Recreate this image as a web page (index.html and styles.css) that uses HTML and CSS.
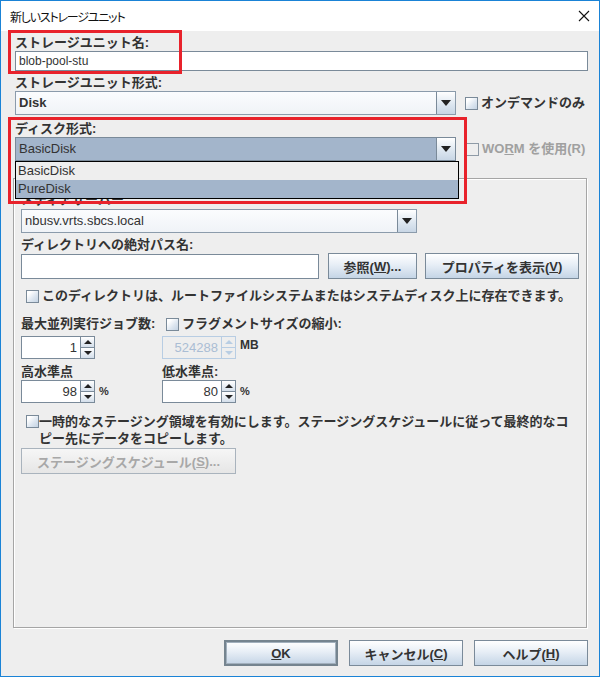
FILE: index.html
```html
<!DOCTYPE html>
<html lang="ja">
<head>
<meta charset="utf-8">
<title>新しいストレージユニット</title>
<link rel="stylesheet" href="styles.css">
</head>
<body>
<div class="window">
  <div class="titlebar">
    <span class="title">新しいストレージユニット</span>
    <svg class="close" width="12" height="12" viewBox="0 0 12 12"><path d="M1 1 L11 11 M11 1 L1 11" stroke="#111" stroke-width="1.1" fill="none"/></svg>
  </div>
  <div class="content">
    <div class="label l1">ストレージユニット名:</div>
    <div class="textfield name">blob-pool-stu</div>

    <div class="label l2">ストレージユニット形式:</div>
    <div class="row combo-row">
      <div class="combo wide"><span class="combo-text b">Disk</span><span class="arrow-btn"><svg width="10" height="6" viewBox="0 0 10 6"><path d="M0 0 H10 L5 6 Z" fill="#222"/></svg></span></div>
      <div class="check"><span class="box"></span><span>オンデマンドのみ</span></div>
    </div>

    <div class="label l3">ディスク形式:</div>
    <div class="row combo-row">
      <div class="combo wide selected"><span class="combo-text">BasicDisk</span><span class="arrow-btn"><svg width="10" height="6" viewBox="0 0 10 6"><path d="M0 0 H10 L5 6 Z" fill="#222"/></svg></span></div>
      <div class="check disabled"><span class="box"></span><span>WO<u>R</u>M を使用(R)</span></div>
    </div>

    <div class="panel">
      <div class="label media">メディアサーバー:</div>
      <div class="combo media-combo"><span class="combo-text">nbusv.vrts.sbcs.local</span><span class="arrow-btn"><svg width="10" height="6" viewBox="0 0 10 6"><path d="M0 0 H10 L5 6 Z" fill="#222"/></svg></span></div>

      <div class="label dir">ディレクトリへの絶対パス名:</div>
      <div class="row path-row">
        <div class="textfield path"></div>
        <div class="btn browse">参照(<u>W</u>)...</div>
        <div class="btn props">プロパティを表示(<u>V</u>)</div>
      </div>

      <div class="check root"><span class="box"></span><span>このディレクトリは、ルートファイルシステムまたはシステムディスク上に存在できます。</span></div>

      <div class="grid2 lrow1">
        <div class="label">最大並列実行ジョブ数:</div>
        <div class="check frag"><span class="box"></span><span>フラグメントサイズの縮小:</span></div>
      </div>
      <div class="grid2 srow">
        <div class="spin-wrap">
          <div class="spinner"><div class="spin-field">1</div><div class="spin-btns"><span class="up"><i></i></span><span class="down"><i></i></span></div></div>
        </div>
        <div class="spin-wrap">
          <div class="spinner disabled"><div class="spin-field">524288</div><div class="spin-btns"><span class="up"><i></i></span><span class="down"><i></i></span></div></div>
          <span class="unit mb">MB</span>
        </div>
      </div>
      <div class="grid2 lrow2">
        <div class="label">高水準点</div>
        <div class="label">低水準点:</div>
      </div>
      <div class="grid2 srow2">
        <div class="spin-wrap">
          <div class="spinner"><div class="spin-field">98</div><div class="spin-btns"><span class="up"><i></i></span><span class="down"><i></i></span></div></div>
          <span class="unit pct">%</span>
        </div>
        <div class="spin-wrap">
          <div class="spinner"><div class="spin-field">80</div><div class="spin-btns"><span class="up"><i></i></span><span class="down"><i></i></span></div></div>
          <span class="unit pct">%</span>
        </div>
      </div>

      <div class="check staging"><span class="box"></span><span class="wrap-text">一時的なステージング領域を有効にします。ステージングスケジュールに従って最終的なコピー先にデータをコピーします。</span></div>
      <div class="btn sched disabled">ステージングスケジュール(<u>S</u>)...</div>
    </div>

    <div class="buttons">
      <div class="btn dlg default"><u>O</u>K</div>
      <div class="btn dlg">キャンセル(<u>C</u>)</div>
      <div class="btn dlg">ヘルプ(<u>H</u>)</div>
    </div>
  </div>

  <div class="popup">
    <div class="item">BasicDisk</div>
    <div class="item sel">PureDisk</div>
  </div>
  <div class="redbox r1"></div>
  <div class="redbox r2"></div>
</div>
</body>
</html>
```
FILE: styles.css
```css
* { box-sizing: border-box; }
html, body { margin: 0; padding: 0; }
body {
  width: 600px;
  height: 677px;
  background: #fff;
  font-family: "Liberation Sans", "Noto Sans CJK JP", sans-serif;
  color: #333;
}
u { text-decoration: underline; text-underline-offset: 1px; }

.window {
  position: relative;
  width: 600px;
  height: 677px;
  border: 1px solid #1a83d6;
  display: flex;
  flex-direction: column;
}

.titlebar {
  height: 30px;
  background: #fff;
  display: flex;
  align-items: center;
  justify-content: space-between;
  padding: 0 9px 0 9px;
}
.title {
  font-family: "Noto Sans CJK JP", sans-serif;
  font-size: 12px;
  font-feature-settings: "palt";
  letter-spacing: -1.2px;
  color: #111;
  padding-top: 1px;
}

.content {
  flex: 1;
  background: #eeeeee;
  padding: 4px 11px 0 14px;
  display: flex;
  flex-direction: column;
}

.label {
  font-family: "Liberation Sans", "Noto Sans CJK JP", sans-serif;
  font-weight: bold;
  font-size: 13px;
  line-height: 16px;
  height: 16px;
  white-space: nowrap;
  color: #333;
}
.l2 { margin-top: 4px; }
.l3 { margin-top: 6px; }

.textfield {
  background: #fff;
  border: 1px solid #7a8a99;
  font-size: 12px;
  line-height: 18px;
  padding: 0 3px;
  color: #333;
}
.name { height: 20px; width: 573px; }

.row { display: flex; align-items: center; }

.combo {
  display: flex;
  height: 24px;
  border: 1px solid #8b9bab;
  background: linear-gradient(#fbfcfe, #f0f3f7);
}
.combo.wide { width: 441px; }
.combo-text {
  flex: 1;
  font-size: 13px;
  line-height: 22px;
  padding-left: 3px;
  color: #333;
}
.combo-text.b { font-weight: bold; }
.combo.selected { background: #a3b5cb; border-color: #7a8a99; }
.arrow-btn {
  width: 19px;
  border-left: 1px solid #7a8a99;
  background: linear-gradient(#ffffff, #dbe5ef 60%, #c8d6e5);
  display: flex;
  align-items: center;
  justify-content: center;
}

.check {
  display: flex;
  align-items: center;
  font-weight: bold;
  font-size: 13px;
  line-height: 16px;
  white-space: nowrap;
  color: #333;
}
.check .box {
  width: 13px;
  height: 13px;
  border: 1px solid #7a8a99;
  background: linear-gradient(135deg, #ffffff 20%, #dde6f0 60%, #c4d3e3);
  margin-right: 3px;
  flex: none;
}
.combo-row .check { margin-left: 9px; }
.check.disabled { color: #a0a0a0; margin-left: 10px; }
.check.disabled .box { background: #eee; border-color: #8e9aa6; }

.panel {
  margin-top: 17px;
  margin-left: -2px;
  width: 574px;
  height: 450px;
  border: 1px solid #a5a5a5;
  box-shadow: 1px 1px 0 #fff, inset 1px 1px 0 #fff;
  padding: 0 0 0 7px;
  display: flex;
  flex-direction: column;
}
.label.media { margin-top: 13px; }
.media-combo { margin-top: 1px; width: 396px; }

.label.dir { margin-top: 4px; }
.path-row { height: 26px; align-items: flex-end; }
.path { width: 298px; height: 25px; }

.btn {
  display: flex;
  align-items: center;
  justify-content: center;
  height: 26px;
  border: 1px solid #7a8a99;
  background: linear-gradient(#ffffff, #e7eef6 45%, #c5d5e6);
  font-weight: bold;
  font-size: 13px;
  color: #333;
  white-space: nowrap;
}
.browse { width: 89px; margin-left: 9px; }
.props { width: 154px; margin-left: 8px; }

.check.root { margin-top: 9px; margin-left: 5px; height: 16px; }

.grid2 {
  display: grid;
  grid-template-columns: 141px 1fr;
}
.lrow1 { margin-top: 12px; height: 16px; }
.check.frag { margin-left: 4px; }
.srow { margin-top: 4px; }
.lrow2 { margin-top: 5px; height: 16px; }
.srow2 { margin-top: 0px; }

.spin-wrap { display: flex; align-items: flex-start; }
.spinner {
  display: flex;
  width: 74px;
  height: 23px;
  border: 1px solid #7a8a99;
  background: #fff;
}
.spin-field {
  flex: 1;
  text-align: right;
  font-size: 13px;
  line-height: 21px;
  padding-right: 3px;
  color: #333;
}
.spin-btns {
  width: 14px;
  border-left: 1px solid #7a8a99;
  display: flex;
  flex-direction: column;
}
.spin-btns span {
  flex: 1;
  background: linear-gradient(#ffffff, #d4dfeb);
  display: flex;
  align-items: center;
  justify-content: center;
}
.spin-btns .up { border-bottom: 1px solid #7a8a99; }
.spin-btns i {
  width: 0; height: 0;
  border-left: 4px solid transparent;
  border-right: 4px solid transparent;
}
.spin-btns .up i { border-bottom: 4px solid #222; }
.spin-btns .down i { border-top: 4px solid #222; }

.spinner.disabled { border-color: #b8cde3; background: #eeeeee; }
.spinner.disabled .spin-field { color: #aabdd4; }
.spinner.disabled .spin-btns { border-color: #b8cde3; }
.spinner.disabled .spin-btns span { background: #eeeeee; }
.spinner.disabled .spin-btns .up { border-color: #b8cde3; }
.spinner.disabled .spin-btns .up i { border-bottom-color: #b8cde3; }
.spinner.disabled .spin-btns .down i { border-top-color: #b8cde3; }

.unit { font-weight: bold; font-size: 12px; color: #333; }
.mb { margin-left: 4px; line-height: 14px; padding-top: 2px; }
.pct { margin-left: 4px; font-size: 11px; line-height: 23px; }

.check.staging {
  margin-top: 10px;
  margin-left: 5px;
  align-items: flex-start;
  white-space: normal;
}
.check.staging .box { margin-right: 0; margin-top: 2px; }
.wrap-text { width: 540px; line-height: 17px; }

.sched { margin-top: 1px; width: 215px; }
.btn.disabled { color: #a8a8a8; border-color: #a9b3bd; background: linear-gradient(#f6f6f6, #e6e6e6); }

.buttons {
  margin-top: 12px;
  display: flex;
  justify-content: flex-end;
  gap: 11px;
}
.btn.dlg { width: 114px; height: 26px; }
.btn.default { border: 2px solid #75848f; box-shadow: inset 0 0 0 1px #a2b0bd; }

.popup {
  position: absolute;
  left: 14px;
  top: 160px;
  width: 444px;
  height: 38px;
  border: 1px solid #000;
  background: #eeeeee;
}
.popup .item {
  height: 18px;
  font-size: 13px;
  line-height: 18px;
  padding-left: 2px;
  color: #333;
}
.popup .item.sel { background: #a3b5cb; }

.redbox {
  position: absolute;
  border: 3px solid #e8222b;
}
.r1 { left: 7px; top: 29px; width: 174px; height: 44px; }
.r2 { left: 7px; top: 116px; width: 459px; height: 87px; }
```
